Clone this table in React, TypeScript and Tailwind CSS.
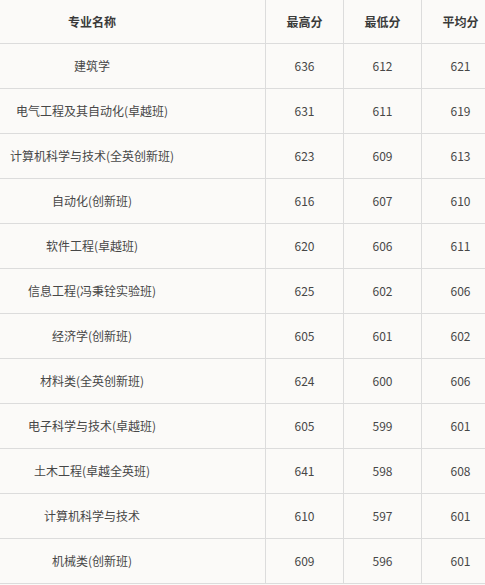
import React from "react";

const rows: [string, string, string, string][] = [
  ["建筑学", "636", "612", "621"],
  ["电气工程及其自动化(卓越班)", "631", "611", "619"],
  ["计算机科学与技术(全英创新班)", "623", "609", "613"],
  ["自动化(创新班)", "616", "607", "610"],
  ["软件工程(卓越班)", "620", "606", "611"],
  ["信息工程(冯秉铨实验班)", "625", "602", "606"],
  ["经济学(创新班)", "605", "601", "602"],
  ["材料类(全英创新班)", "624", "600", "606"],
  ["电子科学与技术(卓越班)", "605", "599", "601"],
  ["土木工程(卓越全英班)", "641", "598", "608"],
  ["计算机科学与技术", "610", "597", "601"],
  ["机械类(创新班)", "609", "596", "601"],
];

const headers = ["专业名称", "最高分", "最低分", "平均分"];

export default function App() {
  return (
    <div
      className="w-[485px] h-[585px] overflow-hidden bg-[#fbfaf8]"
      style={{ fontFamily: '"Noto Sans CJK SC", "Noto Sans", sans-serif' }}
    >
      <div className="ml-[-81px] grid grid-cols-[347px_78px_78px_78px]">
        {headers.map((h) => (
          <div
            key={h}
            className="h-[44px] flex items-center justify-center border-b border-r border-[#dcdcdc] text-[12px] font-bold text-[#3a3a3a]"
          >
            {h}
          </div>
        ))}
        {rows.map((r, i) =>
          r.map((c, j) => (
            <div
              key={i + "-" + j}
              className="h-[45px] flex items-center justify-center border-b border-r border-[#dcdcdc] text-[12px] text-[#474747]"
            >
              {c}
            </div>
          ))
        )}
      </div>
    </div>
  );
}
